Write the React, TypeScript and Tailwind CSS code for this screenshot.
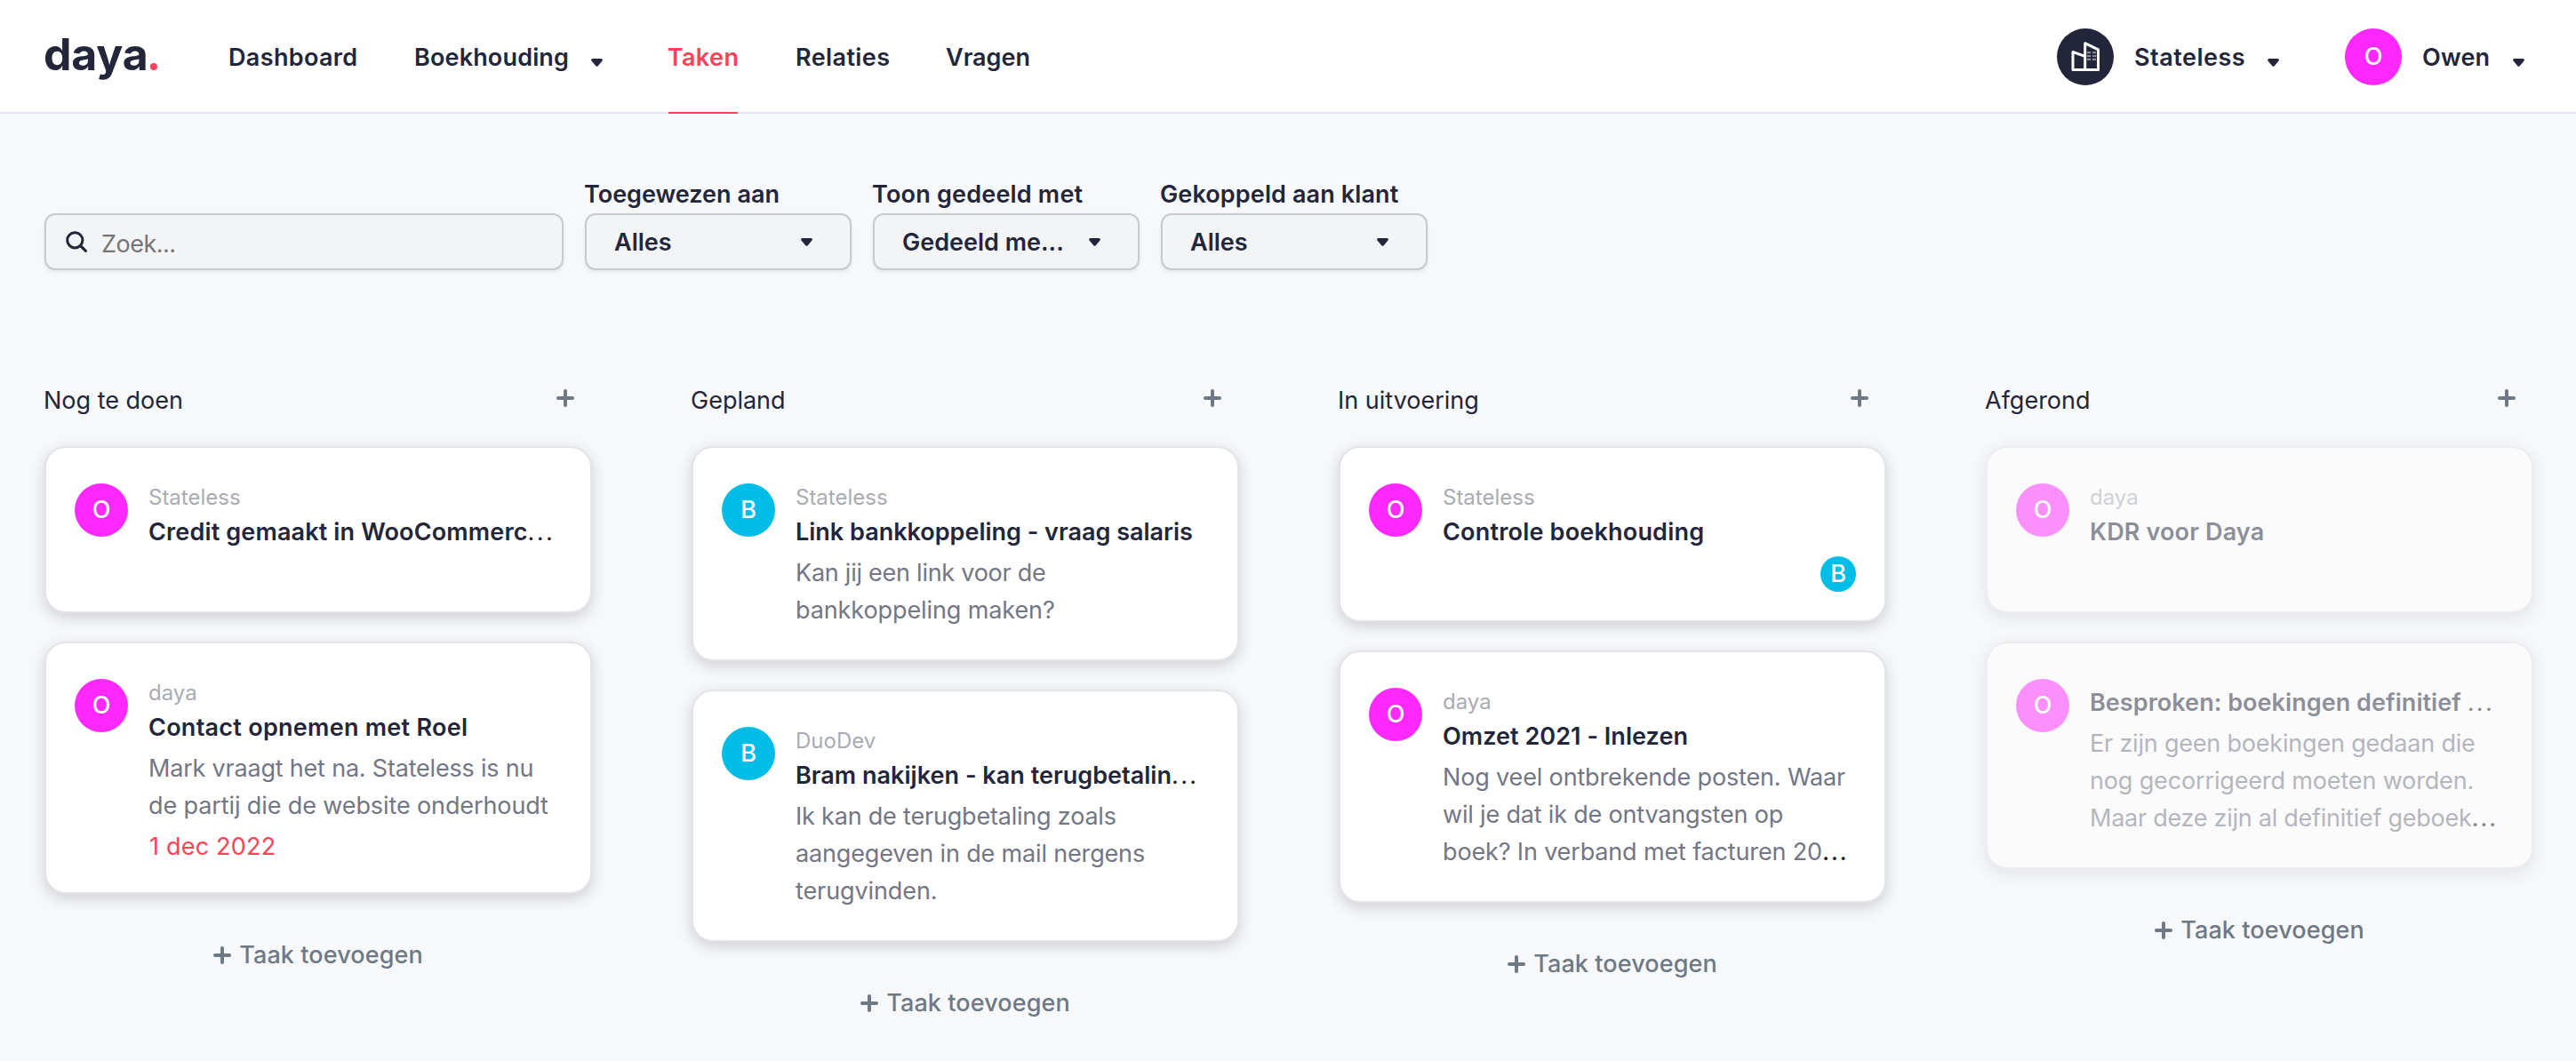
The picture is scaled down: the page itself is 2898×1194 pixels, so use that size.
import clsx from 'clsx';

interface ITask {
  assignee: 'O' | 'B';
  client?: string;
  title: string;
  titleClass: string;
  truncated?: boolean;
  lines?: { text: string; className: string; truncated?: boolean }[];
  date?: string;
  sharedWith?: 'O' | 'B';
}

interface IColumn {
  name: string;
  done?: boolean;
  tasks: ITask[];
}

const columns: IColumn[] = [
  {
    name: 'Nog te doen',
    tasks: [
      {
        assignee: 'O',
        client: 'Stateless',
        title: 'Credit gemaakt in WooCommerc',
        titleClass: 'tracking-[0.15px]',
        truncated: true,
      },
      {
        assignee: 'O',
        client: 'daya',
        title: 'Contact opnemen met Roel',
        titleClass: 'tracking-[0.27px]',
        lines: [
          { text: 'Mark vraagt het na. Stateless is nu', className: 'tracking-[-0.2px]' },
          { text: 'de partij die de website onderhoudt', className: 'tracking-[-0.11px]' },
        ],
        date: '1 dec 2022',
      },
    ],
  },
  {
    name: 'Gepland',
    tasks: [
      {
        assignee: 'B',
        client: 'Stateless',
        title: 'Link bankkoppeling - vraag salaris',
        titleClass: 'tracking-normal',
        lines: [
          { text: 'Kan jij een link voor de', className: 'tracking-[-0.25px]' },
          { text: 'bankkoppeling maken?', className: 'tracking-[-0.1px]' },
        ],
      },
      {
        assignee: 'B',
        client: 'DuoDev',
        title: 'Bram nakijken - kan terugbetalin',
        titleClass: 'tracking-[0.03px]',
        truncated: true,
        lines: [
          { text: 'Ik kan de terugbetaling zoals', className: 'tracking-[-0.2px]' },
          { text: 'aangegeven in de mail nergens', className: 'tracking-[-0.16px]' },
          { text: 'terugvinden.', className: 'tracking-[-0.1px]' },
        ],
      },
    ],
  },
  {
    name: 'In uitvoering',
    tasks: [
      {
        assignee: 'O',
        client: 'Stateless',
        title: 'Controle boekhouding',
        titleClass: 'tracking-[0.2px]',
        sharedWith: 'B',
      },
      {
        assignee: 'O',
        client: 'daya',
        title: 'Omzet 2021 - Inlezen',
        titleClass: 'tracking-[0.05px]',
        lines: [
          { text: 'Nog veel ontbrekende posten. Waar', className: 'tracking-[-0.15px]' },
          { text: 'wil je dat ik de ontvangsten op', className: 'tracking-[-0.18px]' },
          {
            text: 'boek? In verband met facturen 20',
            className: 'tracking-[-0.15px]',
            truncated: true,
          },
        ],
      },
    ],
  },
  {
    name: 'Afgerond',
    done: true,
    tasks: [
      {
        assignee: 'O',
        client: 'daya',
        title: 'KDR voor Daya',
        titleClass: 'tracking-[0.15px]',
      },
      {
        assignee: 'O',
        title: 'Besproken: boekingen definitief ',
        titleClass: 'tracking-[0.05px]',
        truncated: true,
        lines: [
          { text: 'Er zijn geen boekingen gedaan die', className: 'tracking-[-0.2px]' },
          { text: 'nog gecorrigeerd moeten worden.', className: 'tracking-[-0.15px]' },
          {
            text: 'Maar deze zijn al definitief geboek',
            className: 'tracking-[-0.26px]',
            truncated: true,
          },
        ],
      },
    ],
  },
];

const filters = [
  { label: 'Toegewezen aan', labelClass: 'tracking-normal', value: 'Alles' },
  { label: 'Toon gedeeld met', labelClass: 'tracking-[0.2px]', value: 'Gedeeld me...' },
  { label: 'Gekoppeld aan klant', labelClass: 'tracking-[0.12px]', value: 'Alles' },
];

const Caret = ({ className }: { className?: string }) => (
  <svg viewBox="0 0 13 9" className={clsx('h-[9px] w-[13px] shrink-0', className)}>
    <path
      d="M1.7 0h9.6c1.3 0 2.1 1.6 1.2 2.6L7.7 8.2c-.7.8-1.7.8-2.4 0L.5 2.6C-.4 1.6.4 0 1.7 0Z"
      fill="currentColor"
    />
  </svg>
);

const Plus = () => (
  <svg viewBox="0 0 20 20" className="size-5 shrink-0">
    <path
      d="M10 2v16M2 10h16"
      stroke="currentColor"
      strokeWidth="4"
      strokeLinecap="round"
    />
  </svg>
);

const Avatar = ({ letter, className }: { letter: string; className: string }) => (
  <div
    className={clsx(
      'flex shrink-0 items-center justify-center rounded-full font-medium text-white',
      letter === 'O' ? 'bg-[#ff29ff]' : 'bg-[#00bde8]',
      className,
    )}
  >
    {letter}
  </div>
);

const Header = () => (
  <header className="flex h-32 items-start justify-between border-b-2 border-[#e4e7f3] bg-white pr-[58px] pl-12 font-semibold">
    <div className="flex">
      <div className="flex h-32 w-52 items-center pb-[11px] pl-px text-[50px] leading-none font-bold">
        <span className="tracking-[-0.2px]">
          daya<span className="font-['Lato'] text-[54px] leading-none text-[#ff4257]">.</span>
        </span>
      </div>
      <nav className="flex gap-16">
        <a className="flex h-32 w-[145px] items-center pt-0.5 pl-px tracking-[0.35px]">
          Dashboard
        </a>
        <a className="flex h-32 w-[223px] items-center justify-between pr-2.5 pl-px tracking-[0.15px]">
          <span className="pt-0.5">Boekhouding</span>
          <Caret className="mt-3" />
        </a>
        <a className="flex h-32 w-[78px] items-center justify-center border-b-2 border-[#ff4257] pt-1 tracking-[0.4px] text-[#ff4257]">
          Taken
        </a>
        <a className="flex h-32 w-[106px] items-center pt-0.5 pl-px tracking-[0.4px]">
          Relaties
        </a>
        <a className="flex h-32 items-center pt-0.5">Vragen</a>
      </nav>
    </div>
    <div className="flex h-32 items-center gap-[74px]">
      <div className="flex w-[250px] items-center">
        <svg viewBox="0 0 64 64" className="mr-[23px] size-16">
          <circle cx="32" cy="32" r="32" fill="#23263b" />
          <path
            d="M18 46.5V26.5l13.7 4.8M31.7 46.5V16.7l14.8 7.2v22.6H18"
            fill="none"
            stroke="#fff"
            strokeWidth="3"
            strokeLinejoin="round"
            strokeLinecap="round"
          />
          <path
            d="M34 27.2h4.2M40 27.2h4.2M34 31h4.2M40 31h4.2M34 34.9h4.2M40 34.9h4.2"
            stroke="#868996"
            strokeWidth="2.2"
          />
        </svg>
        <span className="pt-0.5 tracking-[0.5px]">Stateless</span>
        <Caret className="mt-3 ml-auto" />
      </div>
      <div className="flex w-[202px] items-center">
        <Avatar letter="O" className="mr-[23px] size-16" />
        <span className="pt-0.5 tracking-[0.2px]">Owen</span>
        <Caret className="mt-3 ml-auto" />
      </div>
    </div>
  </header>
);

const Filters = () => (
  <div className="flex items-end gap-6 pt-[74px] pl-[50px]">
    <div className="flex h-16 w-[584px] items-center rounded-xl border-2 border-[#c8cad0] bg-[#f3f4f6] pl-[22px] shadow-[0_2px_4px_rgba(0,0,0,0.08)]">
      <svg viewBox="0 0 24 24" className="size-6" fill="none" stroke="currentColor">
        <circle cx="10.3" cy="10.3" r="8.6" strokeWidth="3" />
        <path d="m16.6 16.6 5.8 5.8" strokeWidth="3.2" strokeLinecap="round" />
      </svg>
      <span className="pt-1.5 pl-4 tracking-[-0.5px] text-[#757575]">Zoek...</span>
    </div>
    {filters.map((filter) => (
      <div key={filter.label} className="w-[300px]">
        <div
          className={clsx(
            '-ml-px mb-1 leading-[34px] font-semibold whitespace-nowrap',
            filter.labelClass,
          )}
        >
          {filter.label}
        </div>
        <div className="flex h-16 items-center justify-between rounded-xl border-2 border-[#c8cad0] bg-[#f3f4f6] pr-[42px] pl-[31px] font-semibold shadow-[0_2px_4px_rgba(0,0,0,0.08)]">
          <span className="pt-0.5">{filter.value}</span>
          <Caret />
        </div>
      </div>
    ))}
  </div>
);

const TaskCard = ({ task, done }: { task: ITask; done?: boolean }) => (
  <div
    className={clsx(
      'flex min-h-[188px] items-start rounded-3xl border-2 border-[#e3e4e7] bg-white px-8 pt-10 pb-[30px] shadow-[0_5px_16px_rgba(35,38,59,0.19)]',
      done && 'opacity-50',
    )}
  >
    <Avatar letter={task.assignee} className="size-[60px]" />
    <div className="min-w-0 flex-1 pt-1.5 pl-[23px] whitespace-nowrap">
      {task.client && (
        <div className="mb-2 text-2xl leading-5 text-[#a9abb3]">{task.client}</div>
      )}
      <div className={clsx('mb-1 font-semibold whitespace-pre', task.titleClass)}>
        {task.title}
        {task.truncated && (
          <span className="font-normal tracking-[2.4px] text-[#1c1c1c]">...</span>
        )}
      </div>
      {task.lines && (
        <div className="mb-1 text-[#737685]">
          {task.lines.map((line) => (
            <div key={line.text} className={line.className}>
              {line.text}
              {line.truncated && (
                <span className="font-medium tracking-[1.6px] text-[#1c1c1c]">...</span>
              )}
            </div>
          ))}
        </div>
      )}
      {task.date && (
        <div className="pl-px tracking-[0.2px] text-[#ff4257]">{task.date}</div>
      )}
      {task.sharedWith && (
        <Avatar letter={task.sharedWith} className="mt-1.5 mb-0.5 ml-auto size-10" />
      )}
    </div>
  </div>
);

export default function App() {
  return (
    <div className="min-h-[1194px] bg-[#f7f8fa] font-['Inter',sans-serif] text-[27px] leading-[42px] text-[#23263b]">
      <Header />
      <Filters />
      <main className="flex items-start gap-28 pt-[126px] pl-[50px]">
        {columns.map((column) => (
          <section key={column.name} className="w-[616px] shrink-0">
            <div className="-ml-px flex items-center justify-between pr-5 pb-[30px]">
              <h2>{column.name}</h2>
              <button className="pb-1.5 text-[#6f7885]">
                <Plus />
              </button>
            </div>
            <div className="flex flex-col gap-8">
              {column.tasks.map((task) => (
                <TaskCard key={task.title} task={task} done={column.done} />
              ))}
            </div>
            <button className="mx-auto mt-12 flex items-center gap-[9px] font-medium tracking-[0.1px] text-[#6f7885]">
              <Plus />
              Taak toevoegen
            </button>
          </section>
        ))}
      </main>
    </div>
  );
}
